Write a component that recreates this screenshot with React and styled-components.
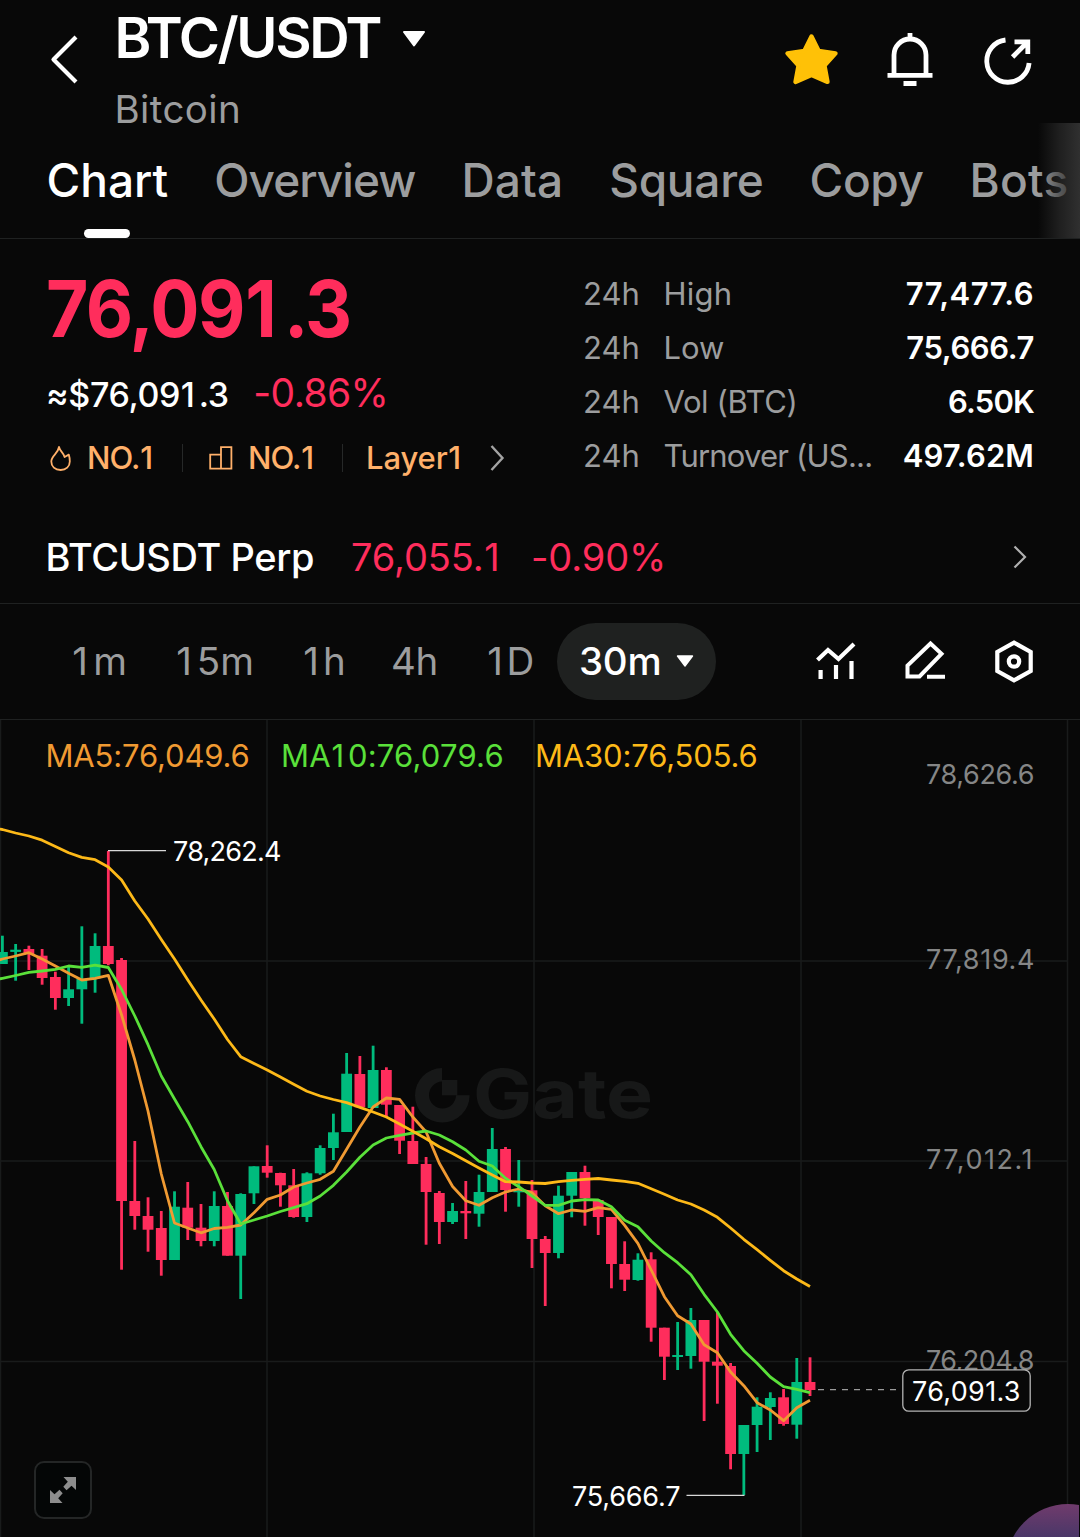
import React from "react";
import styled, { createGlobalStyle } from "styled-components";

const c = {
  bg: "#080808",
  line: "#1f2121",
  grid: "#191b1b",
  text: "#ffffff",
  muted: "#9c9d9e",
  red: "#ff2d5c",
  green: "#00bb7d",
  tag: "#ffb06a",
  ma5: "#f09a32",
  ma10: "#5ae03a",
  ma30: "#fdb918",
};

const GlobalStyle = createGlobalStyle`
  html, body { margin: 0; padding: 0; background: ${c.bg}; }
  * { box-sizing: border-box; }
  svg { display: block; flex: none; }
`;

const Screen = styled.main`
  position: relative;
  display: flex;
  flex-direction: column;
  width: 1080px;
  height: 1537px;
  overflow: hidden;
  background: ${c.bg};
  color: ${c.text};
  font-family: Inter, "Liberation Sans", sans-serif;
  white-space: nowrap;
`;

const TxtBox = styled.span`
  display: block;
  font-size: ${(p) => p.$size}px;
  font-weight: ${(p) => p.$weight || 400};
  letter-spacing: ${(p) => p.$track || 0}px;
  color: ${(p) => p.$color || c.text};
`;
const One = styled.span`
  margin: 0 0.12em 0 0.02em;
`;

/* The narrow "1" gets side room so that it fills a full digit column. */
function Txt({ children, ...props }) {
  const parts = String(children).split("1");
  return (
    <TxtBox {...props}>
      {parts.map((part, i) => (
        <React.Fragment key={i}>
          {i > 0 && <One>1</One>}
          {part}
        </React.Fragment>
      ))}
    </TxtBox>
  );
}

/* ---------- header ---------- */
const Header = styled.header`
  display: flex;
  height: 123px;
  padding: 0 42.5px 0 48px;
`;
const BackButton = styled.div`
  padding-top: 32px;
  margin-right: 34.5px;
`;
const TitleBlock = styled.div`
  flex: 1;
`;
const TitleRow = styled.div`
  display: flex;
  align-items: center;
  gap: 22px;
  height: 76px;
  line-height: 76px;
`;
const Subtitle = styled.div`
  margin-top: 19px;
  line-height: 28px;
`;
const HeaderIcons = styled.div`
  display: flex;
  gap: 38px;
  padding-top: 30px;
`;

/* ---------- tabs ---------- */
const Tabs = styled.nav`
  position: relative;
  display: flex;
  gap: 46px;
  height: 116px;
  padding-left: 46.5px;
  border-bottom: 1px solid ${c.line};
  overflow: hidden;
`;
const Tab = styled.div`
  display: flex;
  flex-direction: column;
  align-items: center;
  line-height: 115px;
`;
const TabMark = styled.i`
  width: 46px;
  height: 9px;
  margin-top: -9px;
  border-radius: 4.5px;
  background: ${c.text};
`;
const TabsFade = styled.div`
  position: absolute;
  top: 0;
  right: 0;
  width: 42px;
  height: 116px;
  background: linear-gradient(90deg, rgba(46, 46, 46, 0), rgba(46, 46, 46, 0.6) 50%, #303030);
`;

/* ---------- ticker ---------- */
const Ticker = styled.section`
  display: flex;
  justify-content: space-between;
  height: 246px;
  padding: 21px 46px 0;
`;
const Price = styled.div`
  width: 340px;
  height: 97px;
  line-height: 96px;
  transform: scaleX(0.925);
  transform-origin: 0 50%;
`;
const Quote = styled.div`
  display: flex;
  align-items: baseline;
  gap: 24.5px;
  height: 73px;
  line-height: 72px;
`;
const Tags = styled.div`
  display: flex;
  align-items: center;
  height: 55px;
  line-height: 55px;
`;
const Tag = styled.div`
  display: flex;
  align-items: center;
  gap: 15px;
  width: ${(p) => p.$width}px;
`;
const TagDivider = styled.i`
  width: 1px;
  height: 28px;
  margin-right: ${(p) => p.$right}px;
  background: #262828;
`;
const Stats = styled.div`
  width: 451px;
  padding-top: 7px;
`;
const StatRow = styled.div`
  display: flex;
  height: 54px;
  line-height: 54px;
`;
const StatSpan = styled.div`
  width: 80.5px;
`;
const StatValue = styled.div`
  flex: 1;
  text-align: right;
`;

/* ---------- perpetual ---------- */
const Perp = styled.section`
  display: flex;
  align-items: center;
  height: 119px;
  padding: 26px 52px 0 45.5px;
  border-bottom: 1px solid ${c.line};
`;
const PerpName = styled.div`
  width: 305.5px;
`;
const PerpPrice = styled.div`
  width: 180px;
`;
const PerpChange = styled.div`
  flex: 1;
`;

/* ---------- time frames ---------- */
const Frames = styled.section`
  display: flex;
  align-items: center;
  height: 116px;
  padding: 0 42px 0 71.5px;
  border-bottom: 1px solid ${c.line};
`;
const Frame = styled.div`
  width: ${(p) => p.$width}px;
  padding-bottom: 2px;
`;
const FramePill = styled.div`
  display: flex;
  align-items: center;
  gap: 15px;
  width: 159px;
  height: 77px;
  padding: 0 0 2px 22px;
  border-radius: 38.5px;
  background: #1f2120;
`;
const FrameTools = styled.div`
  display: flex;
  gap: 41px;
  margin: -2px 0 0 auto;
`;

/* ---------- chart ---------- */
const ChartArea = styled.section`
  position: relative;
  height: 817px;
`;
const Legend = styled.div`
  position: absolute;
  top: 0;
  left: 0;
  display: flex;
  padding-left: 45.5px;
  line-height: 71px;
`;
const LegendItem = styled.div`
  width: ${(p) => p.$width}px;
`;
const ExpandButton = styled.div`
  position: absolute;
  left: 34px;
  top: 741px;
  display: grid;
  place-items: center;
  width: 58px;
  height: 58px;
  border: 2px solid #242626;
  border-radius: 10px;
  background: #040606;
`;
const OrbClip = styled.div`
  position: absolute;
  right: 1px;
  bottom: 0;
  width: 72px;
  height: 33px;
  overflow: hidden;
`;
const Orb = styled.div`
  width: 124px;
  height: 124px;
  margin-left: -1px;
  border-radius: 50%;
  background: linear-gradient(180deg, #703b6c 0, #4a3768 33px);
`;
const ChartSvg = styled.svg`
  font-family: Inter, "Liberation Sans", sans-serif;
`;

/* [direction, high, body top, body bottom, low] */
const candles = [
  [1, 935.7, 952, 964, 964], [1, 944, 949.7, 951.9, 980.7], [0, 945.7, 949, 954, 970],
  [0, 949, 955.7, 978, 984.7], [0, 971.7, 977, 998, 1009.7], [1, 966.7, 989.3, 998, 1006],
  [1, 926.3, 979, 989.3, 1023.7], [1, 933.3, 946, 978.5, 992.7], [0, 851, 946, 964, 965.3],
  [0, 958, 960, 1201, 1269.7], [0, 1141, 1201, 1216, 1229.7], [0, 1197.3, 1216, 1229.7, 1251.7],
  [0, 1211, 1228, 1260, 1275.7], [1, 1191.3, 1206.7, 1260, 1260], [0, 1182, 1207.7, 1227.7, 1240],
  [0, 1204, 1227.7, 1241, 1246.3], [1, 1191.3, 1206, 1241, 1246.3], [0, 1192, 1206, 1255.7, 1255.7],
  [1, 1193.3, 1194, 1255.7, 1299], [1, 1166.3, 1166.3, 1193.3, 1204], [0, 1145.3, 1166, 1172.7, 1177.7],
  [0, 1172.7, 1173, 1185.3, 1206.7], [0, 1169, 1185.3, 1217, 1217.7], [1, 1172.3, 1173.3, 1217, 1222],
  [1, 1145.3, 1148, 1173.3, 1174.7], [1, 1113.7, 1132.3, 1148, 1160], [1, 1053, 1073.7, 1132, 1132],
  [0, 1056, 1074, 1107.3, 1107.3], [1, 1045.7, 1070, 1108, 1108], [0, 1067.3, 1070, 1104.7, 1116.7],
  [0, 1105, 1105, 1140.7, 1154], [0, 1106.7, 1141, 1164, 1164], [0, 1157, 1164, 1192, 1244.7],
  [0, 1191, 1193, 1222, 1244], [1, 1203, 1211, 1222, 1224], [0, 1181, 1211, 1213.3, 1239],
  [1, 1174.7, 1192, 1213.7, 1226.7], [1, 1128, 1149, 1192, 1192], [0, 1147, 1149, 1190, 1211.7],
  [1, 1160, 1190.7, 1192.3, 1206.7], [0, 1180, 1190.3, 1239, 1268], [0, 1236, 1239, 1253, 1306],
  [1, 1185.7, 1195.7, 1253, 1258.3], [1, 1172, 1172, 1195.7, 1217.3], [0, 1165.7, 1172, 1198.3, 1225.7],
  [0, 1199.3, 1200, 1217, 1235], [0, 1217, 1217, 1264, 1288.3], [0, 1241.3, 1264, 1279.7, 1291],
  [1, 1253.3, 1259.7, 1280, 1280.7], [0, 1252.3, 1259.3, 1327.7, 1341.7], [0, 1327.7, 1327.7, 1356.7, 1380],
  [1, 1322, 1355, 1357, 1370], [1, 1308, 1320, 1356, 1368.7], [0, 1320, 1320, 1361.7, 1421],
  [0, 1312, 1361.7, 1365.7, 1403.7], [0, 1363, 1366, 1454, 1469.3], [1, 1425, 1425, 1454, 1495],
  [1, 1397.3, 1406.7, 1425, 1452], [1, 1392.3, 1398, 1407, 1440], [0, 1389, 1397.3, 1424, 1425.7],
  [1, 1358, 1382, 1424.7, 1438.7], [0, 1357.3, 1382, 1390, 1396],
];

const candleX = (i) => 2.4 + 13.24 * i;

/* one value per candle, after the value at the left edge */
const ma30 = [
  829, 829.5, 833, 836, 840.2, 846.5, 852.7, 857.4, 859.7, 867, 880, 901, 919, 939.5, 959, 980, 1000,
  1019, 1039.5, 1056.7, 1063.5, 1070, 1077, 1084.3, 1091.3, 1096, 1099.5, 1102.6, 1107.4, 1112, 1117,
  1124, 1131.3, 1138.7, 1146.7, 1153.5, 1160.8, 1168, 1175, 1181.7, 1182, 1183, 1183.5, 1181.7, 1180.3,
  1179.3, 1178.5, 1180, 1181.3, 1183.3, 1188.7, 1194.2, 1200, 1204, 1210, 1217.3, 1228, 1239.3, 1249.7,
  1260.3, 1270.7, 1279, 1286.5,
];
const ma10 = [
  979, 978.3, 975.5, 972.4, 971, 969.4, 966, 967.3, 965.2, 967.5, 989.5, 1016, 1044.7, 1076, 1099, 1121.7,
  1146.7, 1169.5, 1200.7, 1224, 1220, 1216, 1211.5, 1207.7, 1203.7, 1196, 1185.3, 1172, 1157.3, 1145,
  1138, 1135.3, 1133, 1131, 1135, 1141.7, 1150, 1161.3, 1166, 1178.3, 1186.7, 1196, 1205.3, 1205.3, 1201,
  1199.7, 1200, 1206.7, 1220.3, 1226.7, 1241, 1252.7, 1262.7, 1274.7, 1294.3, 1312, 1334.3, 1350.7,
  1363.3, 1377, 1386.7, 1389.3, 1392.7,
];
const ma5 = [
  960, 959, 956, 952.7, 959, 966, 973.3, 980, 978.3, 975.3, 1015, 1060, 1111, 1174, 1223, 1228, 1232.8,
  1228.5, 1227.4, 1225, 1212.7, 1199.3, 1195, 1187, 1183, 1179.3, 1171.3, 1149.3, 1127, 1107, 1098,
  1099.3, 1117, 1132, 1163.3, 1186.5, 1200.7, 1205.3, 1197.7, 1192, 1189, 1192.7, 1205.7, 1213.7, 1210,
  1211.3, 1207.7, 1209.3, 1225.3, 1243.3, 1270, 1296.7, 1315.7, 1324, 1344.7, 1352.7, 1372, 1385.7,
  1402.7, 1410, 1420.7, 1407.7, 1400.3,
];
const linePoints = (values) =>
  values.map((y, i) => `${i === 0 ? -1 : candleX(i - 1).toFixed(1)},${y}`).join(" ");

const axisLabels = [
  ["78,626.6", 784],
  ["77,819.4", 969],
  ["77,012.1", 1169, 106.5],
  ["76,204.8", 1370],
];

const tabs = [
  ["Chart", 0],
  ["Overview", -0.95],
  ["Data", 0.1],
  ["Square", -0.25],
  ["Copy", -0.4],
  ["Bots", 0.2],
];

const stats = [
  ["High", 0.2, "77,477.6", 0.5],
  ["Low", 0, "75,666.7", -0.4],
  ["Vol (BTC)", -0.4, "6.50K", -0.85],
  ["Turnover (US...", -0.8, "497.62M", 0.1],
];

const frames = [
  ["1m", 104, 0.8],
  ["15m", 127, 0.2],
  ["1h", 88.5, -0.5],
  ["4h", 95.5, -0.3],
  ["1D", 70.5, -1],
];

function ChartPrice({ x, y, width = 108.5, children }) {
  return (
    <text x={x} y={y} textLength={width} lengthAdjust="spacing">
      {children}
    </text>
  );
}

function Chart() {
  return (
    <ChartSvg width="1080" height="817" viewBox="0 720 1080 817">
      <g stroke={c.grid} strokeWidth="1.5">
        {[0.5, 267, 534, 801, 1067.5].map((x) => (
          <line key={x} x1={x} x2={x} y1="720" y2="1537" />
        ))}
        {[961, 1161, 1361.5].map((y) => (
          <line key={y} x1="0" x2="1068" y1={y} y2={y} />
        ))}
      </g>

      <g fill="#171818">
        <path d="M442 1068A27.3 27.3 0 1 0 469.6 1095.3H456A13.5 13.5 0 1 1 442 1081.5Z" />
        <rect x="442" y="1080" width="15.3" height="15.3" />
        <text
          x="473"
          y="1118"
          fontSize="67"
          fontWeight="700"
          textLength="180"
          lengthAdjust="spacingAndGlyphs"
        >
          Gate
        </text>
      </g>

      <g fontSize="27" fill="#858686">
        {axisLabels.map(([label, y, width]) => (
          <ChartPrice key={label} x="926" y={y} width={width}>
            {label}
          </ChartPrice>
        ))}
      </g>

      {candles.map(([up, high, top, bottom, low], i) => (
        <g key={i} fill={up ? c.green : c.red}>
          <rect x={candleX(i) - 1.4} y={high} width="2.8" height={low - high} />
          <rect x={candleX(i) - 5.4} y={top} width="10.8" height={bottom - top} />
        </g>
      ))}

      <g fill="none" strokeWidth="2.8" strokeLinejoin="round">
        <polyline points={linePoints(ma5)} stroke={c.ma5} />
        <polyline points={linePoints(ma10)} stroke={c.ma10} />
        <polyline points={linePoints(ma30)} stroke={c.ma30} />
      </g>

      <g stroke="#d8d8d8" strokeWidth="1.3">
        <line x1="108" x2="166" y1="850.7" y2="850.7" />
        <line x1="686.5" x2="744.5" y1="1495.3" y2="1495.3" />
        <line x1="818" x2="902" y1="1389.7" y2="1389.7" stroke="#9a9a9a" strokeDasharray="6 6" />
      </g>
      <rect x="902.8" y="1369.8" width="127.4" height="41.4" rx="6" fill={c.bg} stroke="#b4b4b4" strokeWidth="1.3" />
      <g fontSize="27" fill={c.text}>
        <ChartPrice x="173" y="861">78,262.4</ChartPrice>
        <ChartPrice x="572" y="1506">75,666.7</ChartPrice>
        <ChartPrice x="912" y="1401">76,091.3</ChartPrice>
      </g>
    </ChartSvg>
  );
}

export default function App() {
  return (
    <Screen>
      <GlobalStyle />

      <Header>
        <BackButton>
          <svg width="32" height="56" viewBox="0 0 32 56" fill="none" stroke="#fff" strokeWidth="4.2">
            <path d="M28 5 5.5 27.5 28 50" strokeLinejoin="round" />
          </svg>
        </BackButton>
        <TitleBlock>
          <TitleRow>
            <Txt $size={56} $weight={600} $track={-2.4}>BTC/USDT</Txt>
            <svg width="24" height="18" viewBox="0 0 24 18">
              <path d="M2 3H22L12 16.5Z" fill="#fff" stroke="#fff" strokeWidth="2" strokeLinejoin="round" />
            </svg>
          </TitleRow>
          <Subtitle>
            <Txt $size={38.5} $track={0.4} $color={c.muted}>Bitcoin</Txt>
          </Subtitle>
        </TitleBlock>
        <HeaderIcons>
          <svg width="60" height="60" viewBox="0 0 60 60">
            <path
              d="M29.5 6.5 36.7 21 53.5 23.4 42.5 35.6 45.5 51.9 29.5 45 13.5 51.9 16.5 35.6 5.5 23.4 22.3 21Z"
              fill="#ffc107"
              stroke="#ffc107"
              strokeWidth="4.4"
              strokeLinejoin="round"
            />
          </svg>
          <svg width="60" height="60" viewBox="0 0 60 60" fill="none" stroke="#fff" strokeWidth="4.8">
            <path d="M14 45V25a16 16 0 0 1 32 0V45M7.5 45.3H52.5M30 3V9M23.5 53.5H36.5" />
          </svg>
          <svg width="60" height="60" viewBox="0 0 60 60" fill="none" stroke="#fff" strokeWidth="4.8">
            <path d="M27.5 10A21.2 21.2 0 1 0 51.1 33M36.5 11.8H49.8V24M49.8 11.8 34.6 27" />
          </svg>
        </HeaderIcons>
      </Header>

      <Tabs>
        {tabs.map(([label, track], i) => (
          <Tab key={label}>
            <Txt $size={46} $weight={500} $track={track} $color={i ? c.muted : c.text}>{label}</Txt>
            {i === 0 && <TabMark />}
          </Tab>
        ))}
        <TabsFade />
      </Tabs>

      <Ticker>
        <div>
          <Price>
            <Txt $size={79} $weight={700} $track={-1.7} $color={c.red}>76,091.3</Txt>
          </Price>
          <Quote>
            <Txt $size={34} $weight={500} $track={-0.35}>≈$76,091.3</Txt>
            <Txt $size={39} $track={-0.6} $color={c.red}>-0.86%</Txt>
          </Quote>
          <Tags>
            <Tag $width={136}>
              <svg width="26" height="26" viewBox="-4 0 26 26" fill="none" stroke={c.tag} strokeWidth="1.8" strokeLinejoin="round">
                <path d="M9 2C10 6.5 14 8.3 14.6 12L18.8 9.6C19.6 12 19.8 14 19.8 16.5 19.8 21.5 16 25 10.6 25 5 25 1.3 21.5 1.3 16.5 1.3 10.5 8 9 9 2Z" />
              </svg>
              <Txt $size={31} $weight={500} $track={-0.9} $color={c.tag}>NO.1</Txt>
            </Tag>
            <TagDivider $right={26} />
            <Tag $width={133}>
              <svg width="24" height="24" viewBox="0 0 24 24" fill="none" stroke={c.tag} strokeWidth="1.8">
                <path d="M1.2 8.7H12V22.6H1.2ZM12 22.6V1.2H22.4V22.6Z" />
              </svg>
              <Txt $size={31} $weight={500} $track={-0.9} $color={c.tag}>NO.1</Txt>
            </Tag>
            <TagDivider $right={23} />
            <Txt $size={31} $weight={500} $track={-0.1} $color={c.tag}>Layer1</Txt>
            <svg width="40" height="28" viewBox="-24 0 40 28" fill="none" stroke="#a3a3a3" strokeWidth="2.4">
              <path d="M2.5 2 13.5 14 2.5 26" />
            </svg>
          </Tags>
        </div>
        <Stats>
          {stats.map(([label, lt, value, vt]) => (
            <StatRow key={label}>
              <StatSpan>
                <Txt $size={31} $track={0} $color={c.muted}>24h</Txt>
              </StatSpan>
              <Txt $size={31} $track={lt} $color={c.muted}>{label}</Txt>
              <StatValue>
                <Txt $size={31} $weight={600} $track={vt}>{value}</Txt>
              </StatValue>
            </StatRow>
          ))}
        </Stats>
      </Ticker>

      <Perp>
        <PerpName>
          <Txt $size={38} $weight={500} $track={-0.4}>BTCUSDT Perp</Txt>
        </PerpName>
        <PerpPrice>
          <Txt $size={38} $track={-0.1} $color={c.red}>76,055.1</Txt>
        </PerpPrice>
        <PerpChange>
          <Txt $size={38} $track={-0.15} $color={c.red}>-0.90%</Txt>
        </PerpChange>
        <svg width="16" height="26" viewBox="0 0 16 26" fill="none" stroke="#b0b0b0" strokeWidth="2.2">
          <path d="M2.5 2.5 13 13 2.5 23.5" />
        </svg>
      </Perp>

      <Frames>
        {frames.map(([label, width, track]) => (
          <Frame key={label} $width={width}>
            <Txt $size={38.5} $track={track} $color={c.muted}>{label}</Txt>
          </Frame>
        ))}
        <FramePill>
          <Txt $size={38.5} $weight={500} $track={-0.3}>30m</Txt>
          <svg width="18" height="14" viewBox="0 0 18 14">
            <path d="M1.5 2H16.5L9 12Z" fill="#fff" stroke="#fff" strokeWidth="1.4" strokeLinejoin="round" />
          </svg>
        </FramePill>
        <FrameTools>
          <svg width="48" height="48" viewBox="0 0 48 48" fill="none" stroke="#fff" strokeWidth="4.2">
            <path d="M5.5 23 16 13 26.5 22 42 7M8.6 33V42M24 28V42M39.5 24V42" />
          </svg>
          <svg width="48" height="48" viewBox="0 0 48 48" fill="none" stroke="#fff" strokeWidth="4">
            <path d="M6.5 39.5V28.5L29.5 6.5 40.5 16.8 18.5 39.5ZM26 39.7H44" />
          </svg>
          <svg width="48" height="48" viewBox="0 0 48 48" fill="none" stroke="#fff" strokeWidth="4.2">
            <path d="M24 5.6 40.7 15V34L24 43.4 7.3 34V15Z" />
            <circle cx="24" cy="24.5" r="5.2" />
          </svg>
        </FrameTools>
      </Frames>

      <ChartArea>
        <Chart />
        <Legend>
          <LegendItem $width={235.5}>
            <Txt $size={31} $track={-0.15} $color={c.ma5}>MA5:76,049.6</Txt>
          </LegendItem>
          <LegendItem $width={254}>
            <Txt $size={31} $track={0.2} $color={c.ma10}>MA10:76,079.6</Txt>
          </LegendItem>
          <LegendItem>
            <Txt $size={31} $track={-0.15} $color={c.ma30}>MA30:76,505.6</Txt>
          </LegendItem>
        </Legend>
        <ExpandButton>
          <svg width="26" height="26" viewBox="0 0 26 26" fill="#8d8d8d">
            <path d="M26 0V13L21.5 8.8 16.5 13.2 13.3 9.8 17.8 4.8 13.5 0ZM0 26V13L4.5 17.2 9.5 12.8 12.7 16.2 8.2 21.2 12.5 26Z" />
          </svg>
        </ExpandButton>
        <OrbClip>
          <Orb />
        </OrbClip>
      </ChartArea>
    </Screen>
  );
}
